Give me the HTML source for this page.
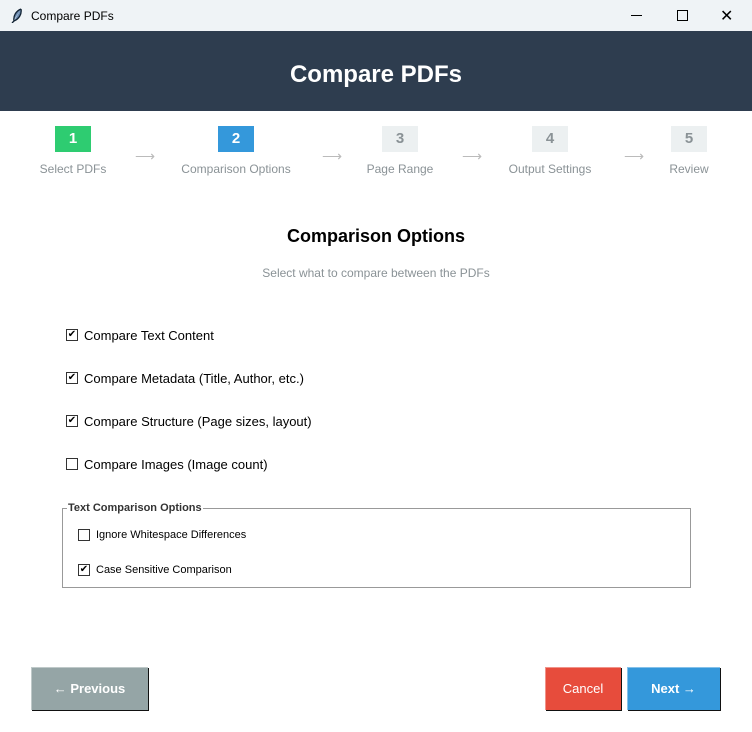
<!DOCTYPE html><html><head><style>
body{margin:0;width:752px;height:732px;position:relative;background:#fff;font-family:"Liberation Sans",sans-serif;overflow:hidden}
.a{position:absolute}
.t{font-size:13px;color:#000;white-space:nowrap}
.box{width:36px;height:26px;color:#fff;font-weight:bold;font-size:15px;text-align:center;line-height:26px}
.lab{font-size:12px;color:#8a9296;transform:translateX(-50%);white-space:nowrap}
.arr{color:#bbb;font-size:14px}
.cb{width:10px;height:10px;border:1px solid #333;background:#fff;font-size:10px;line-height:10px;text-align:center;box-sizing:content-box}
.btn{color:#fff;font-size:13px;text-align:center;line-height:43px;box-shadow:1px 1px 0 #111, inset 1px 1px 0 rgba(255,255,255,.4)}
</style></head><body>
<div class="a" style="left:0;top:0;width:752px;height:31px;background:#eff3f6"></div>
<svg class="a" style="left:11px;top:8px" width="12" height="15" viewBox="0 0 12 15"><path d="M10 1 C5 3 2 8 3 13 L1 15 M3 13 C8 11 11 6 10 1" stroke="#123" stroke-width="1.3" fill="#6a8ab0"/></svg>
<div class="a t" style="left:31px;top:9px;font-size:12px">Compare PDFs</div>
<div class="a" style="left:631px;top:15px;width:11px;height:1px;background:#000"></div>
<div class="a" style="left:677px;top:10px;width:9px;height:9px;border:1px solid #000"></div>
<div class="a t" style="left:720px;top:6px;font-size:16px">✕</div>
<div class="a" style="left:0;top:31px;width:752px;height:80px;background:#2e3d4f"></div>
<div class="a" style="left:0;top:61px;width:752px;text-align:center;color:#fff;font-weight:bold;font-size:24px">Compare PDFs</div>

<div class="a box" style="left:55px;top:126px;background:#2ecc71">1</div>
<div class="a box" style="left:218px;top:126px;background:#3498db">2</div>
<div class="a box" style="left:382px;top:126px;background:#ecf0f1;color:#8a9296">3</div>
<div class="a box" style="left:532px;top:126px;background:#ecf0f1;color:#8a9296">4</div>
<div class="a box" style="left:671px;top:126px;background:#ecf0f1;color:#8a9296">5</div>
<div class="a lab" style="left:73px;top:162px">Select PDFs</div>
<div class="a lab" style="left:236px;top:162px">Comparison Options</div>
<div class="a lab" style="left:400px;top:162px">Page Range</div>
<div class="a lab" style="left:550px;top:162px">Output Settings</div>
<div class="a lab" style="left:689px;top:162px">Review</div>
<div class="a arr" style="left:135px;top:148px">⟶</div>
<div class="a arr" style="left:322px;top:148px">⟶</div>
<div class="a arr" style="left:462px;top:148px">⟶</div>
<div class="a arr" style="left:624px;top:148px">⟶</div>

<div class="a" style="left:0;top:226px;width:752px;text-align:center;font-weight:bold;font-size:18px">Comparison Options</div>
<div class="a" style="left:0;top:266px;width:752px;text-align:center;font-size:12px;color:#8a9296">Select what to compare between the PDFs</div>

<div class="a cb" style="left:66px;top:329px">✔</div><div class="a t" style="left:84px;top:328px">Compare Text Content</div>
<div class="a cb" style="left:66px;top:372px">✔</div><div class="a t" style="left:84px;top:371px">Compare Metadata (Title, Author, etc.)</div>
<div class="a cb" style="left:66px;top:415px">✔</div><div class="a t" style="left:84px;top:414px">Compare Structure (Page sizes, layout)</div>
<div class="a cb" style="left:66px;top:458px"></div><div class="a t" style="left:84px;top:457px">Compare Images (Image count)</div>

<div class="a" style="left:62px;top:508px;width:627px;height:78px;border:1px solid #999"></div>
<div class="a t" style="left:67px;top:502px;background:#fff;font-weight:bold;font-size:11px;color:#333;padding:0 1px">Text Comparison Options</div>
<div class="a cb" style="left:78px;top:529px"></div><div class="a t" style="left:96px;top:529px;font-size:11px">Ignore Whitespace Differences</div>
<div class="a cb" style="left:78px;top:564px">✔</div><div class="a t" style="left:96px;top:564px;font-size:11px">Case Sensitive Comparison</div>

<div class="a btn" style="left:31px;top:667px;width:117px;height:43px;background:#95a5a6;font-weight:bold">← Previous</div>
<div class="a btn" style="left:545px;top:667px;width:76px;height:43px;background:#e74c3c">Cancel</div>
<div class="a btn" style="left:627px;top:667px;width:93px;height:43px;background:#3498db;font-weight:bold">Next →</div>
</body></html>
